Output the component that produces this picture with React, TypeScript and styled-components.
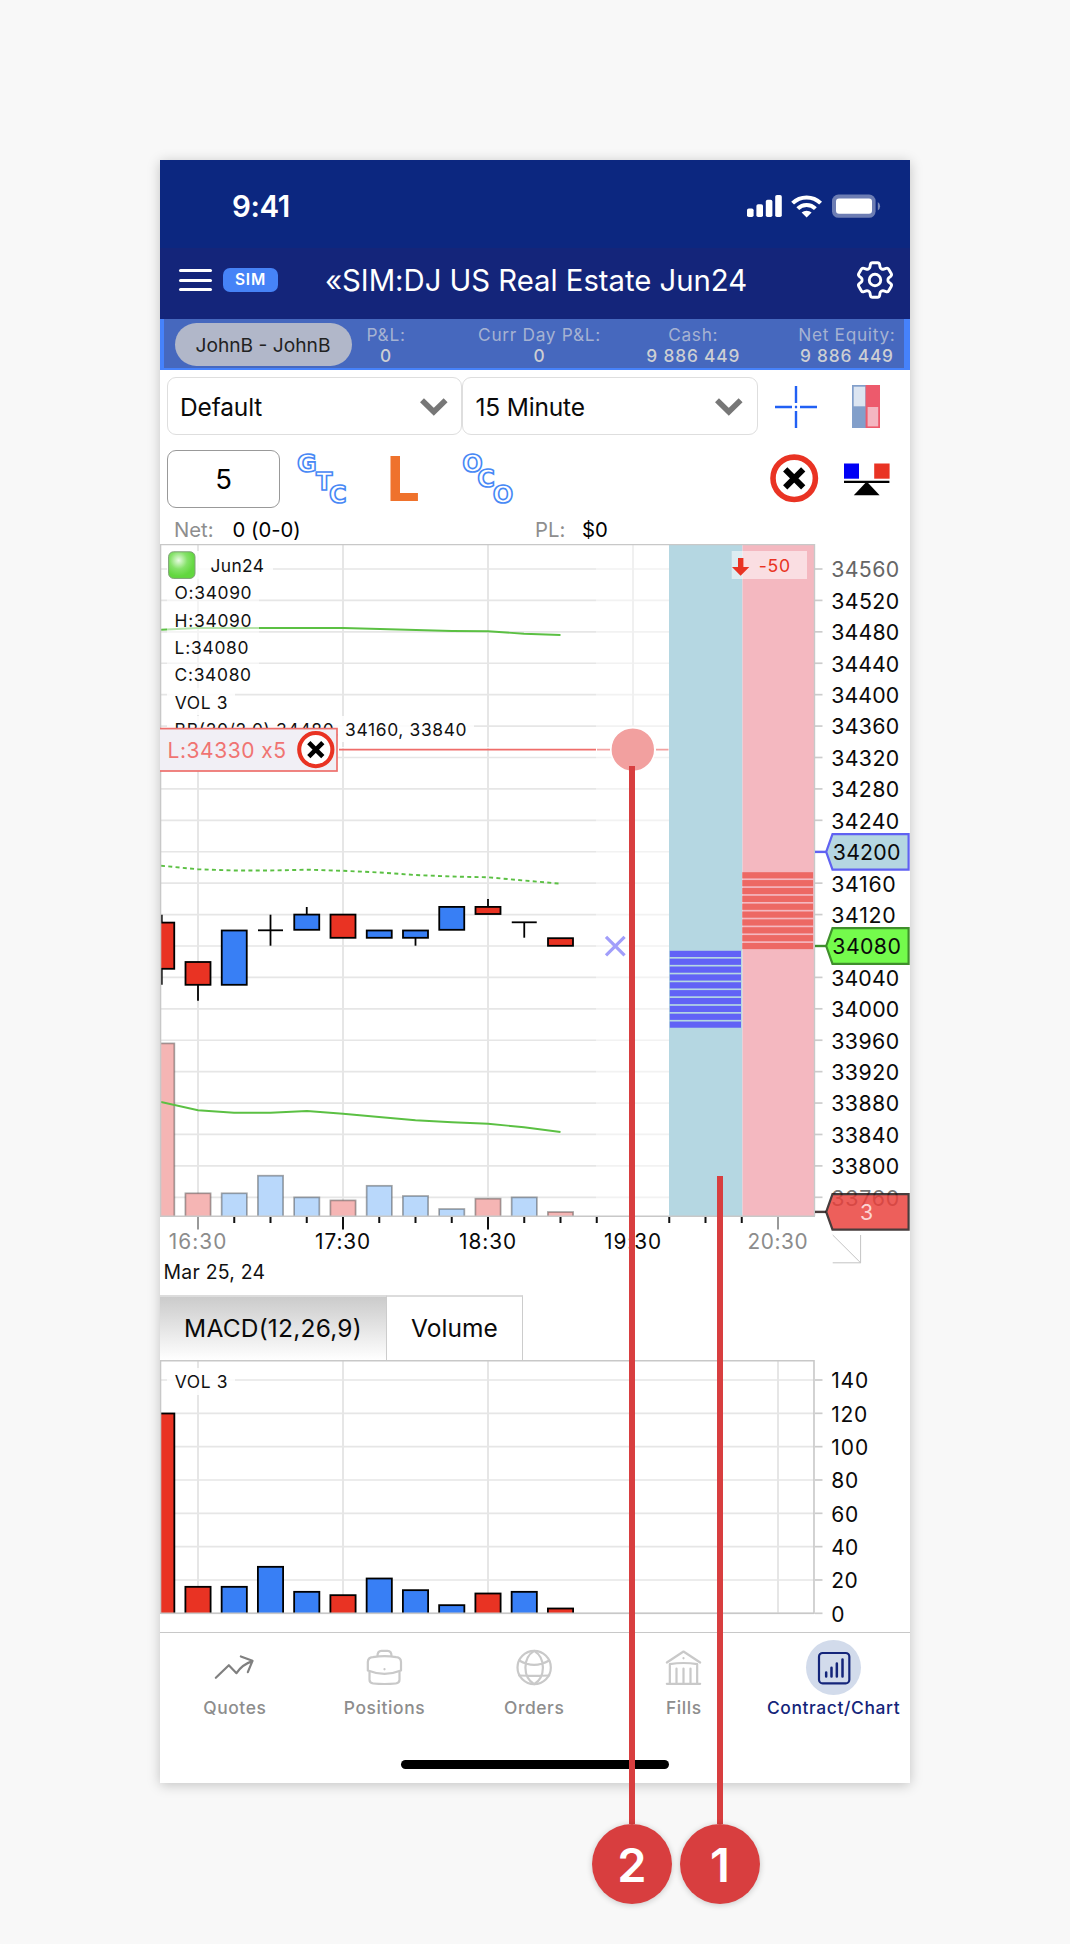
import React from "react";
import styled, { createGlobalStyle } from "styled-components";
import { HiOutlineCog6Tooth } from "react-icons/hi2";

const Global = createGlobalStyle`
  * { box-sizing: border-box; }
  body { margin: 0; background: #f8f8f8; }
`;

const FONT = 'Inter, "Liberation Sans", sans-serif';

const Page = styled.main`
  position: relative;
  width: 1070px;
  height: 1944px;
  padding: 160px;
  background: #f8f8f8;
  font-family: ${FONT};
  font-feature-settings: "calt" 0;
  overflow: hidden;
`;

const Phone = styled.section`
  display: flex;
  flex-direction: column;
  width: 750px;
  height: 1623px;
  background: #fff;
  box-shadow: 0 2px 12px rgba(0, 0, 0, 0.22);
  white-space: nowrap;
`;

/* ---------- header ---------- */

const StatusBar = styled.div`
  display: flex;
  align-items: center;
  justify-content: space-between;
  height: 88px;
  padding: 3px 28px 0 72px;
  background: #0c2780;
  color: #fff;
`;

const Clock = styled.span`
  font-size: 29.5px;
  font-weight: 600;
  letter-spacing: -0.4px;
`;

const NavBar = styled.header`
  display: flex;
  align-items: center;
  height: 71px;
  padding: 0 12px 7px 19px;
  background: #14257a;
  color: #fff;
`;

const Burger = styled.div`
  display: flex;
  flex-direction: column;
  gap: 6.6px;
  width: 33px;
  & > i {
    height: 3px;
    border-radius: 2px;
    background: #fff;
  }
`;

const SimBadge = styled.span`
  width: 55px;
  height: 24px;
  margin-left: 11px;
  border-radius: 7px;
  background: #4683f7;
  font-size: 15.5px;
  font-weight: 600;
  line-height: 24px;
  letter-spacing: 0.8px;
  text-align: center;
`;

const Title = styled.h1`
  flex: 1;
  margin: 1px 0 0 47px;
  font-size: 29.3px;
  font-weight: 400;
  line-height: 40px;
  letter-spacing: -0.02px;
`;

const AccountStrip = styled.div`
  display: flex;
  height: 51px;
  padding: 0 6px 2px 4px;
  background: #4682fb;
`;

const AccountInner = styled.div`
  display: flex;
  align-items: center;
  width: 740px;
  padding: 2px 0 0 10.5px;
  background: #4668be;
`;

const AccountPill = styled.button`
  width: 177px;
  height: 43.5px;
  margin: 0;
  padding: 0;
  border: 0;
  border-radius: 22px;
  background: #b1b7c9;
  color: #222;
  font-family: ${FONT};
  font-size: 19.2px;
`;

const Metric = styled.div<{ $w: number; $before?: number }>`
  width: ${(p) => p.$w}px;
  margin-left: ${(p) => p.$before ?? 0}px;
  padding-top: 1px;
  text-align: center;
  line-height: 21.5px;
`;

const MetricName = styled.div`
  color: #a5b2d2;
  font-size: 17.3px;
  letter-spacing: 0.7px;
`;

const MetricValue = styled.div`
  color: #cdcfd3;
  font-size: 17.3px;
  font-weight: 500;
  letter-spacing: 0.85px;
`;

/* ---------- controls ---------- */

const SelectRow = styled.div`
  display: flex;
  height: 65px;
  padding: 7px 30px 0 7px;
`;

const Select = styled.div`
  display: flex;
  align-items: center;
  justify-content: space-between;
  width: 295.4px;
  height: 58px;
  padding: 1px 12.5px 0 12px;
  border: 1px solid #dedede;
  border-radius: 9px;
  color: #0a0a0a;
  font-size: 24.5px;
  letter-spacing: -0.15px;
`;

const IconSlot = styled.div<{ $left: number; $top?: number }>`
  margin: ${(p) => p.$top ?? 0}px 0 0 ${(p) => p.$left}px;
  line-height: 0;
`;

const OrderRow = styled.div`
  display: flex;
  height: 82px;
  padding: 15px 20px 0 7px;
`;

const Quantity = styled.div`
  width: 113px;
  height: 58px;
  border: 1.5px solid #999;
  border-radius: 9px;
  color: #000;
  font-size: 27.5px;
  line-height: 57px;
  text-align: center;
`;

const Spacer = styled.div`
  flex: 1;
`;

const NetRow = styled.div`
  display: grid;
  grid-template-columns: 58.5px 302.5px 47px 1fr;
  height: 27px;
  padding-left: 14px;
  color: #000;
  font-size: 20.3px;
  line-height: 26px;
`;

const Muted = styled.span`
  color: #8e8e8e;
`;

/* ---------- charts and tabs ---------- */

const ChartSvg = styled.svg`
  display: block;
  flex: none;
  font-family: ${FONT};
`;

const Tabs = styled.div`
  display: flex;
  height: 65px;
`;

const Tab = styled.button<{ $w: number; $ls: number; $active?: boolean }>`
  width: ${(p) => p.$w}px;
  margin: 0;
  padding: 0 0 1px;
  border: 0;
  border-top: 2px solid #dcdcdc;
  border-right: 1.5px solid #ccc;
  background: ${(p) => (p.$active ? "linear-gradient(#cbcbcb, #fff)" : "#fff")};
  color: #0a0a0a;
  font-family: ${FONT};
  font-size: 24.5px;
  letter-spacing: ${(p) => p.$ls}px;
`;

/* ---------- bottom navigation ---------- */

const BottomNav = styled.nav`
  display: grid;
  grid-template-columns: repeat(5, 149.7px);
  height: 92px;
  padding-top: 6.5px;
  border-top: 1.3px solid #c8c8c8;
`;

const NavItem = styled.div<{ $active?: boolean }>`
  display: flex;
  flex-direction: column;
  align-items: center;
  color: ${(p) => (p.$active ? "#14257a" : "#8d8d8d")};
  font-size: 17.4px;
  font-weight: 500;
  line-height: 24px;
  letter-spacing: 0.62px;
`;

const NavIcon = styled.div<{ $active?: boolean }>`
  width: 55px;
  height: 55px;
  margin-bottom: 1.5px;
  border-radius: 50%;
  background: ${(p) => (p.$active ? "#d2dbeb" : "transparent")};
  line-height: 0;
`;

const HomeBar = styled.div`
  width: 268px;
  height: 9.4px;
  margin: 36px auto 0;
  border-radius: 5px;
  background: #000;
`;

/* ---------- callouts ---------- */

const Callout = styled.div<{ $x: number; $top: number }>`
  position: absolute;
  left: ${(p) => p.$x - 40}px;
  top: ${(p) => p.$top}px;
  display: flex;
  flex-direction: column;
  align-items: center;
  width: 80px;
  height: ${(p) => 1904 - p.$top}px;
  &::before {
    content: "";
    flex: 1;
    width: 6px;
    background: #d83e3f;
  }
`;

const CalloutBadge = styled.span`
  width: 80px;
  height: 80px;
  border-radius: 50%;
  background: #d83e3f;
  box-shadow: 0 1px 6px rgba(0, 0, 0, 0.2);
  color: #fff;
  font-size: 47px;
  font-weight: 600;
  line-height: 81px;
  text-align: center;
`;

/* ---------- data ---------- */

const X0 = 161.75;
const STEP = 36.25;
const RED = "#e93323";
const BLUE = "#387ff5";
const GREEN = "#5bc043";

type Bar = {
  up: boolean;
  top: number;
  bottom: number;
  high?: number;
  low?: number;
  volumeTop: number;
  volume: number;
};

const bars: Bar[] = [
  { up: false, top: 922.6, bottom: 968.8, high: 914.7, low: 984.7, volumeTop: 1043.4, volume: 120 },
  { up: false, top: 962, bottom: 984.8, low: 1000.7, volumeTop: 1193.3, volume: 16 },
  { up: true, top: 930.5, bottom: 984.8, volumeTop: 1193.3, volume: 16 },
  { up: true, top: 930.3, bottom: 930.3, high: 914.7, low: 945.7, volumeTop: 1175.7, volume: 28 },
  { up: true, top: 914.6, bottom: 929.8, high: 907, volumeTop: 1197.4, volume: 13 },
  { up: false, top: 914.6, bottom: 937.8, volumeTop: 1200.4, volume: 11 },
  { up: true, top: 930.5, bottom: 937.8, volumeTop: 1185.8, volume: 21 },
  { up: true, top: 930.5, bottom: 937.8, low: 945.7, volumeTop: 1196, volume: 14 },
  { up: true, top: 906.9, bottom: 929.8, volumeTop: 1209, volume: 5 },
  { up: false, top: 906.9, bottom: 914, high: 899, volumeTop: 1198.7, volume: 12 },
  { up: true, top: 922.3, bottom: 922.3, low: 937.7, volumeTop: 1197.4, volume: 13 },
  { up: false, top: 938.2, bottom: 945.8, volumeTop: 1212, volume: 3 },
];

const prices = Array.from({ length: 21 }, (_, i) => 34560 - i * 40);
const priceY = (p: number) => 569 + ((34560 - p) / 40) * 31.415;
const timeX = [198, 343, 488, 633, 778];
const timeLabels = ["16:30", "17:30", "18:30", "19:30", "20:30"];

const legend: [string, number, number, number][] = [
  ["Jun24", 210.5, 571.7, 53.5],
  ["O:34090", 174.6, 599.3, 77],
  ["H:34090", 174.6, 626.7, 77],
  ["L:34080", 174.6, 654, 74],
  ["C:34080", 174.6, 681.3, 76.5],
  ["VOL 3", 174.8, 709, 52.8],
  ["BB(20/2,0) 34480, 34160, 33840", 174.6, 736, 292],
];

/* ---------- chart pieces ---------- */

const CloseGlyph = ({ cx, cy, r, ring, arm, pen }: { cx: number; cy: number; r: number; ring: number; arm: number; pen: number }) => (
  <g fill="none">
    <circle cx={cx} cy={cy} r={r} stroke={RED} strokeWidth={ring} fill="#fff" />
    <path d={`M${cx - arm} ${cy - arm}l${2 * arm} ${2 * arm}M${cx + arm} ${cy - arm}l${-2 * arm} ${2 * arm}`} stroke="#000" strokeWidth={pen} />
  </g>
);

const PriceTag = ({ y, fill, stroke, opacity = 1, label, color = "#0a0a0a", width = 67.5 }: { y: number; fill: string; stroke: string; opacity?: number; label: string; color?: string; width?: number }) => (
  <g>
    <path d={`M815 ${y}H826`} stroke={stroke} strokeWidth={2.4} opacity={opacity} />
    <path d={`M826.2 ${y}L832.5 ${y - 17.8}H908.6V${y + 17.8}H832.5Z`} fill={fill} stroke={stroke} strokeWidth={2.2} opacity={opacity} />
    <text x={866.6} y={y + 8} fontSize={21.3} fill={color} textAnchor="middle" textLength={width}>
      {label}
    </text>
  </g>
);

const PriceChart = () => (
  <ChartSvg width="750" height="751" viewBox="160 544 750 751">
    <defs>
      <radialGradient id="led" cx="0.38" cy="0.32" r="0.6">
        <stop offset="0" stopColor="#e9fbe3" />
        <stop offset="0.55" stopColor="#84e268" />
        <stop offset="1" stopColor="#62d73f" />
      </radialGradient>
      <clipPath id="plot">
        <rect x="161" y="544" width="654" height="672" />
      </clipPath>
    </defs>

    {prices.map((p) => (
      <g key={p} strokeWidth="1.7">
        <path d={`M161 ${priceY(p)}H596`} stroke="#e6e6e6" />
        <path d={`M596 ${priceY(p)}H669`} stroke="#f2f2f2" />
        <path d={`M815 ${priceY(p)}H822.5`} stroke="#ccc" />
      </g>
    ))}
    {timeX.slice(0, 4).map((x) => (
      <path key={x} d={`M${x} 545V1216`} stroke={x > 600 ? "#f0f0f0" : "#e6e6e6"} strokeWidth="2" />
    ))}

    <g clipPath="url(#plot)">
      {bars.map((b, i) => (
        <rect
          key={i}
          x={X0 + i * STEP - 12.6}
          y={b.volumeTop}
          width="25.2"
          height={1218 - b.volumeTop}
          fill={b.up ? "#b9d8fb" : "#f5b5b4"}
          stroke="rgba(60,60,60,0.45)"
          strokeWidth="1.7"
        />
      ))}
      <g fill="none" stroke={GREEN} strokeWidth="1.9">
        <path d="M161 629.7L198 628H343L380 629L452 631L488 631.3L524 633.7L560.5 635" />
        <path
          d="M161 865.7L198 869.3L234 870.5H270L307 869.7L343 870.8L380 872.5L415 875L452 876.5L488 877.3L524 880.5L560.5 883.7"
          strokeDasharray="4 3.3"
        />
        <path d="M161 1102L198 1110.3L234 1112.7H270.5L307 1111L343 1113.7L379 1117L415.5 1120.3L452 1122.3L488 1123.7L524 1127.3L560.5 1132" />
      </g>
      {bars.map((b, i) => {
        const x = X0 + i * STEP;
        return (
          <g key={i} stroke="#000" strokeWidth="1.8">
            {b.high && <path d={`M${x} ${b.high}V${b.top}`} />}
            {b.low && <path d={`M${x} ${b.bottom}V${b.low}`} />}
            {b.top === b.bottom ? (
              <path d={`M${x - 12.5} ${b.top}H${x + 12.5}`} />
            ) : (
              <rect x={x - 12.5} y={b.top} width="25" height={b.bottom - b.top} fill={b.up ? BLUE : RED} />
            )}
          </g>
        );
      })}
    </g>

    <path d="M606 936.8l18.6 18.6M624.6 936.8l-18.6 18.6" stroke="#a19efa" strokeWidth="3.2" />

    {/* bid and ask depth columns */}
    <rect x="669" y="545" width="73.5" height="671" fill="#b5d7e2" />
    <rect x="742.5" y="545" width="71.5" height="671" fill="#f4b8c0" />
    {Array.from({ length: 10 }, (_, i) => (
      <g key={i}>
        <rect x="742.3" y={872.2 + i * 7.86} width="70.8" height="6.2" fill="#ed6864" />
        <rect x="669.8" y={950.8 + i * 7.86} width="71.2" height="6.2" fill="#6162f6" />
      </g>
    ))}

    <path d="M160 544.5H814.5V1216" fill="none" stroke="#c8c8c8" strokeWidth="1.4" />
    <path d="M160.5 544V1216.2H815" fill="none" stroke="#c8c8c8" strokeWidth="1.6" />

    {/* legend */}
    <rect x="167" y="551" width="106" height="28" fill="#fff" opacity="0.85" />
    <rect x="168.6" y="551.8" width="26.4" height="26.6" rx="5" fill="url(#led)" stroke="#7f9f78" strokeWidth="1" />
    <rect x="167" y="579" width="92" height="109" fill="#fff" opacity="0.55" />
    <rect x="167" y="688" width="68" height="27" fill="#fff" opacity="0.85" />
    <rect x="167" y="716" width="307" height="26" fill="#fff" opacity="0.85" />
    {legend.map(([t, x, y, w]) => (
      <text key={t} x={x} y={y} fontSize="17.4" textLength={w} fill="#111">
        {t}
      </text>
    ))}

    {/* change badge */}
    <rect x="731.7" y="551" width="75.3" height="28" fill="#fff" opacity="0.54" />
    <path d="M738 558H743.400V567H749.3L740.6 575.7L732 567H738Z" fill={RED} />
    <text x="758.7" y="572" fontSize="17.6" textLength="31.3" fill={RED}>-50</text>

    {/* working order */}
    <path d="M338 747.7H596" stroke="#fff" strokeWidth="1" />
    <path d="M339 749.6H596" stroke="#ef6d6a" strokeWidth="1.8" />
    <path d="M597 749.6H610M656 749.6H668.5" stroke="#f2a2a1" strokeWidth="1.8" />
    <rect x="155" y="728.6" width="182" height="42.4" fill="#f1eff5" stroke="#ee6f6c" strokeWidth="1.7" />
    <text x="167.6" y="757.8" fontSize="21" textLength="118.5" fill="#f07472">L:34330 x5</text>
    <CloseGlyph cx={315.8} cy={749.6} r={16.6} ring={4.1} arm={7} pen={4.6} />
    <circle cx="632.8" cy="749.6" r="22" fill="#f2a09f" stroke="#fff" strokeWidth="1.6" />

    {/* price axis */}
    {prices.map((p, i) =>
      p === 34200 || p === 34080 ? null : (
        <text key={p} x="831.2" y={priceY(p) + 8.4} fontSize="21.3" textLength={/^341[26]/.test(String(p)) ? 64.5 : 68} fill={i === 0 ? "#666" : p === 33760 ? "#777" : "#0a0a0a"}>
          {p}
        </text>
      ),
    )}
    <PriceTag y={851.9} fill="#b5d7e2" stroke="#6062f2" label="34200" />
    <PriceTag y={946} fill="#74fb4c" stroke="#3f8f2c" label="34080" width={68.5} />
    <PriceTag y={1211.9} fill="#ea3f3a" stroke="#221616" opacity={0.83} label="3" color="#fcd4d3" width={12} />

    {/* time axis */}
    {Array.from({ length: 17 }, (_, i) => {
      const major = i % 4 === 1;
      const x = X0 + i * STEP;
      return i === 0 ? null : (
        <path key={i} d={`M${x} 1217V${major ? 1229.5 : 1223}`} stroke={i === 1 ? "#999" : "#111"} strokeWidth="2" />
      );
    })}
    <path d="M778 1217V1229.5" stroke="#999" strokeWidth="2" />
    {timeLabels.map((t, i) => (
      <text key={t} x={timeX[i] - 0.4} y="1249.4" fontSize="20.8" textAnchor="middle" textLength={[57.5, 55, 57, 57, 60][i]} fill={i === 0 || i === 4 ? "#8c8c8c" : "#0a0a0a"}>
        {t}
      </text>
    ))}
    <text x="163.6" y="1279" fontSize="19.4" textLength="101.5" fill="#111">Mar 25, 24</text>
    <path d="M832.7 1235L860.6 1262.8V1235M832.7 1262.8H860.6" fill="none" stroke="#c4c4c4" strokeWidth="1" />
  </ChartSvg>
);

const VolumeChart = () => (
  <ChartSvg width="750" height="272" viewBox="160 1360 750 272">
    {Array.from({ length: 8 }, (_, i) => {
      const y = 1380 + i * 33.33;
      return (
        <g key={i}>
          <path d={`M161 ${y}H814`} stroke="#e6e6e6" strokeWidth="1.7" />
          <path d={`M815 ${y}H822.5`} stroke="#ccc" strokeWidth="1.7" />
          <text x="831.2" y={y + 8.2} fontSize="21" fill="#0a0a0a" textLength={[37, 36, 37, 27, 27, 27, 26.5, 13][i]}>
            {140 - i * 20}
          </text>
        </g>
      );
    })}
    {timeX.map((x) => (
      <path key={x} d={`M${x} 1361V1613`} stroke="#e6e6e6" strokeWidth="2" />
    ))}
    <clipPath id="volplot">
      <rect x="161" y="1361" width="654" height="252" />
    </clipPath>
    <g clipPath="url(#volplot)">
      {bars.map((b, i) => (
        <rect
          key={i}
          x={X0 + i * STEP - 12.6}
          y={1613.5 - b.volume * 1.6667}
          width="25.2"
          height={b.volume * 1.6667 + 5}
          fill={b.up ? BLUE : RED}
          stroke="#000"
          strokeWidth="1.8"
        />
      ))}
    </g>
    <path d="M160.5 1360.7H814V1613.2H160.5Z" fill="none" stroke="#c8c8c8" strokeWidth="1.6" />
    <rect x="167" y="1368" width="68" height="27" fill="#fff" opacity="0.85" />
    <text x="174.8" y="1388.4" fontSize="17.4" textLength="52.8" fill="#111">VOL 3</text>
  </ChartSvg>
);

/* ---------- icons ---------- */

const Chevron = () => (
  <svg width="30" height="20" viewBox="0 0 30 20">
    <path d="M3 3.2L14.8 14.8L26.6 3.2" fill="none" stroke="#777" strokeWidth="5.6" />
  </svg>
);

const Cellular = () => (
  <svg width="135" height="24" viewBox="747 194 135 24" fill="#fff">
    <rect x="747" y="208.5" width="6.6" height="8.5" rx="1.8" />
    <rect x="756.4" y="204.3" width="6.6" height="12.7" rx="1.8" />
    <rect x="765.8" y="199.8" width="6.6" height="17.2" rx="1.8" />
    <rect x="775.2" y="195" width="6.6" height="22" rx="1.8" />
    <g fill="none" stroke="#fff" strokeWidth="4">
      <path d="M792.6 203.2A19.8 19.8 0 0 1 820.6 203.2" />
      <path d="M797.8 208.7A12.4 12.4 0 0 1 815.4 208.7" />
    </g>
    <path d="M801.6 212.6A7.4 7.4 0 0 1 811.6 212.6L806.6 217.4Z" />
    <rect x="832" y="194.6" width="43.6" height="23.2" rx="6.5" opacity="0.4" />
    <rect x="836" y="198.4" width="36" height="15.4" rx="3" />
    <path d="M877.8 202A5 5 0 0 1 877.8 210.4Z" opacity="0.45" />
  </svg>
);

const Crosshair = () => (
  <svg width="42" height="42" viewBox="0 0 42 42">
    <path d="M21 0V17M21 25V42M0 21H17M25 21H42M19.9 21H22.1" stroke="#2160f4" strokeWidth="2.4" />
  </svg>
);

const DepthIcon = () => (
  <svg width="28" height="43" viewBox="0 0 28 43">
    <rect width="14" height="43" fill="#829fca" />
    <rect x="1.7" y="1.7" width="11.6" height="19.6" fill="#dce5f1" />
    <rect x="13.6" width="14.4" height="43" fill="#ed5a6c" />
    <rect x="15.6" y="22" width="10.6" height="19.4" fill="#f4b6c1" />
  </svg>
);

const OutlinedLetters = ({ letters, at, w }: { letters: string; at: [number, number][]; w: number }) => (
  <svg width={w} height="60" viewBox={`0 0 ${w} 60`} overflow="visible" fontFamily='"DejaVu Sans", sans-serif' fontWeight="700" fontSize="24">
    {letters.split("").map((l, i) => (
      <text key={i} x={at[i][0]} y={at[i][1]} textAnchor="middle" fill="#fff" stroke="#4788f5" strokeWidth="1.6">
        {l}
      </text>
    ))}
  </svg>
);

const LimitLetter = () => (
  <svg width="36" height="48" viewBox="-5 0 36 48" overflow="visible">
    <text x="-4.8" y="46.4" fontFamily='"Noto Sans", sans-serif' fontWeight="700" fontSize="62" fill="#ef722c">L</text>
  </svg>
);

const Balance = () => (
  <svg width="46" height="34" viewBox="0 0 46 34">
    <rect x="0" y="0.5" width="15" height="15.2" fill="#0000f5" />
    <rect x="30.2" y="0.5" width="15.4" height="15.2" fill={RED} />
    <path d="M0 18.8H45.4" stroke="#000" strokeWidth="2.3" />
    <path d="M22.7 18.5L35.6 32.2H9.8Z" fill="#000" />
  </svg>
);

const tabIcon = (vx: number, stroke: string, children: React.ReactNode) => (
  <svg width="55" height="55" viewBox={`${vx - 82.5} 58.5 165 165`} fill="none" stroke={stroke} strokeWidth="6.6" strokeLinecap="round" strokeLinejoin="round">
    {children}
  </svg>
);

const navItems = [
  {
    name: "Quotes",
    icon: tabIcon(255, "#808080", <path d="M199 172L238 134L261 158Q278 132 309 122M274 108L309 121L295 155" />),
  },
  {
    name: "Positions",
    icon: tabIcon(
      706,
      "#c9c9c9",
      <>
        <path d="M671 110Q706 104 741 110Q755 111 755.500 124V150Q706 170 656 150V124Q657 111 671 110Z" />
        <path d="M685 106Q685 91 697 91H715Q727 91 727 106M661 155V178Q661 188 672 189Q706 192 740 189Q751 188 751 178V155" />
        <path d="M706 145.500V146.500" />
      </>,
    ),
  },
  {
    name: "Orders",
    icon: tabIcon(
      1154,
      "#c9c9c9",
      <>
        <circle cx="1153" cy="141" r="50" />
        <path d="M1153 91C1118 112 1118 170 1153 191C1188 170 1188 112 1153 91ZM1108 120Q1153 146 1198 120M1108 165Q1153 167 1198 165" />
      </>,
    ),
  },
  {
    name: "Fills",
    icon: tabIcon(
      461,
      "#c9c9c9",
      <>
        <path d="M411 126L461 93L511 126M420 189V131Q461 124 502 131V189M411 190H511M440 144V186M461 144V186M482 144V186" />
        <path d="M461 113V113.500" />
      </>,
    ),
  },
  {
    name: "Contract/Chart",
    icon: tabIcon(
      913,
      "#14257a",
      <>
        <rect x="869.500" y="97.500" width="91" height="91" rx="11" />
        <path d="M891 156V168M907 142V168M923 129V168M940 117V168" strokeWidth="7.500" />
      </>,
    ),
  },
];

export default function App() {
  return (
    <>
      <Global />
      <Page>
        <Phone>
          <StatusBar>
            <Clock>9:41</Clock>
            <Cellular />
          </StatusBar>
          <NavBar>
            <Burger>
              <i />
              <i />
              <i />
            </Burger>
            <SimBadge>SIM</SimBadge>
            <Title>«SIM:DJ US Real Estate Jun24</Title>
            <HiOutlineCog6Tooth size={46} />
          </NavBar>
          <AccountStrip>
            <AccountInner>
              <AccountPill>JohnB - JohnB</AccountPill>
              <Metric $w={69}>
                <MetricName>P&amp;L:</MetricName>
                <MetricValue>0</MetricValue>
              </Metric>
              <Metric $w={153.7} $before={42.2}>
                <MetricName>Curr Day P&amp;L:</MetricName>
                <MetricValue>0</MetricValue>
              </Metric>
              <Metric $w={153.7}>
                <MetricName>Cash:</MetricName>
                <MetricValue>9 886 449</MetricValue>
              </Metric>
              <Metric $w={113.6} $before={20}>
                <MetricName>Net Equity:</MetricName>
                <MetricValue>9 886 449</MetricValue>
              </Metric>
            </AccountInner>
          </AccountStrip>

          <SelectRow>
            <Select>
              Default
              <Chevron />
            </Select>
            <Select>
              15 Minute
              <Chevron />
            </Select>
            <IconSlot $left={17.2} $top={8.5}>
              <Crosshair />
            </IconSlot>
            <IconSlot $left={35} $top={8}>
              <DepthIcon />
            </IconSlot>
          </SelectRow>

          <OrderRow>
            <Quantity>5</Quantity>
            <IconSlot $left={15}>
              <OutlinedLetters letters="GTC" at={[[11.8, 22], [29.3, 39.8], [42.8, 52.6]]} w={56} />
            </IconSlot>
            <IconSlot $left={34} $top={5.3}>
              <LimitLetter />
            </IconSlot>
            <IconSlot $left={39}>
              <OutlinedLetters letters="OCO" at={[[12.4, 22], [26, 37.2], [43, 52.6]]} w={58} />
            </IconSlot>
            <Spacer />
            <IconSlot $left={0} $top={4}>
              <svg width="49" height="49" viewBox="0 0 49 49">
                <CloseGlyph cx={24.2} cy={24.3} r={21.2} ring={5.6} arm={9} pen={6} />
              </svg>
            </IconSlot>
            <IconSlot $left={25.5} $top={13}>
              <Balance />
            </IconSlot>
          </OrderRow>

          <NetRow>
            <Muted>Net:</Muted>
            <span>0 (0-0)</span>
            <Muted>PL:</Muted>
            <span>$0</span>
          </NetRow>

          <PriceChart />

          <Tabs>
            <Tab $w={227} $ls={0.22} $active>
              MACD(12,26,9)
            </Tab>
            <Tab $w={136} $ls={0.05}>
              Volume
            </Tab>
          </Tabs>

          <VolumeChart />

          <BottomNav>
            {navItems.map((n, i) => (
              <NavItem key={n.name} $active={i === 4}>
                <NavIcon $active={i === 4}>{n.icon}</NavIcon>
                {n.name}
              </NavItem>
            ))}
          </BottomNav>
          <HomeBar />
        </Phone>

        <Callout $x={632} $top={766}>
          <CalloutBadge>2</CalloutBadge>
        </Callout>
        <Callout $x={720} $top={1176}>
          <CalloutBadge>1</CalloutBadge>
        </Callout>
      </Page>
    </>
  );
}
